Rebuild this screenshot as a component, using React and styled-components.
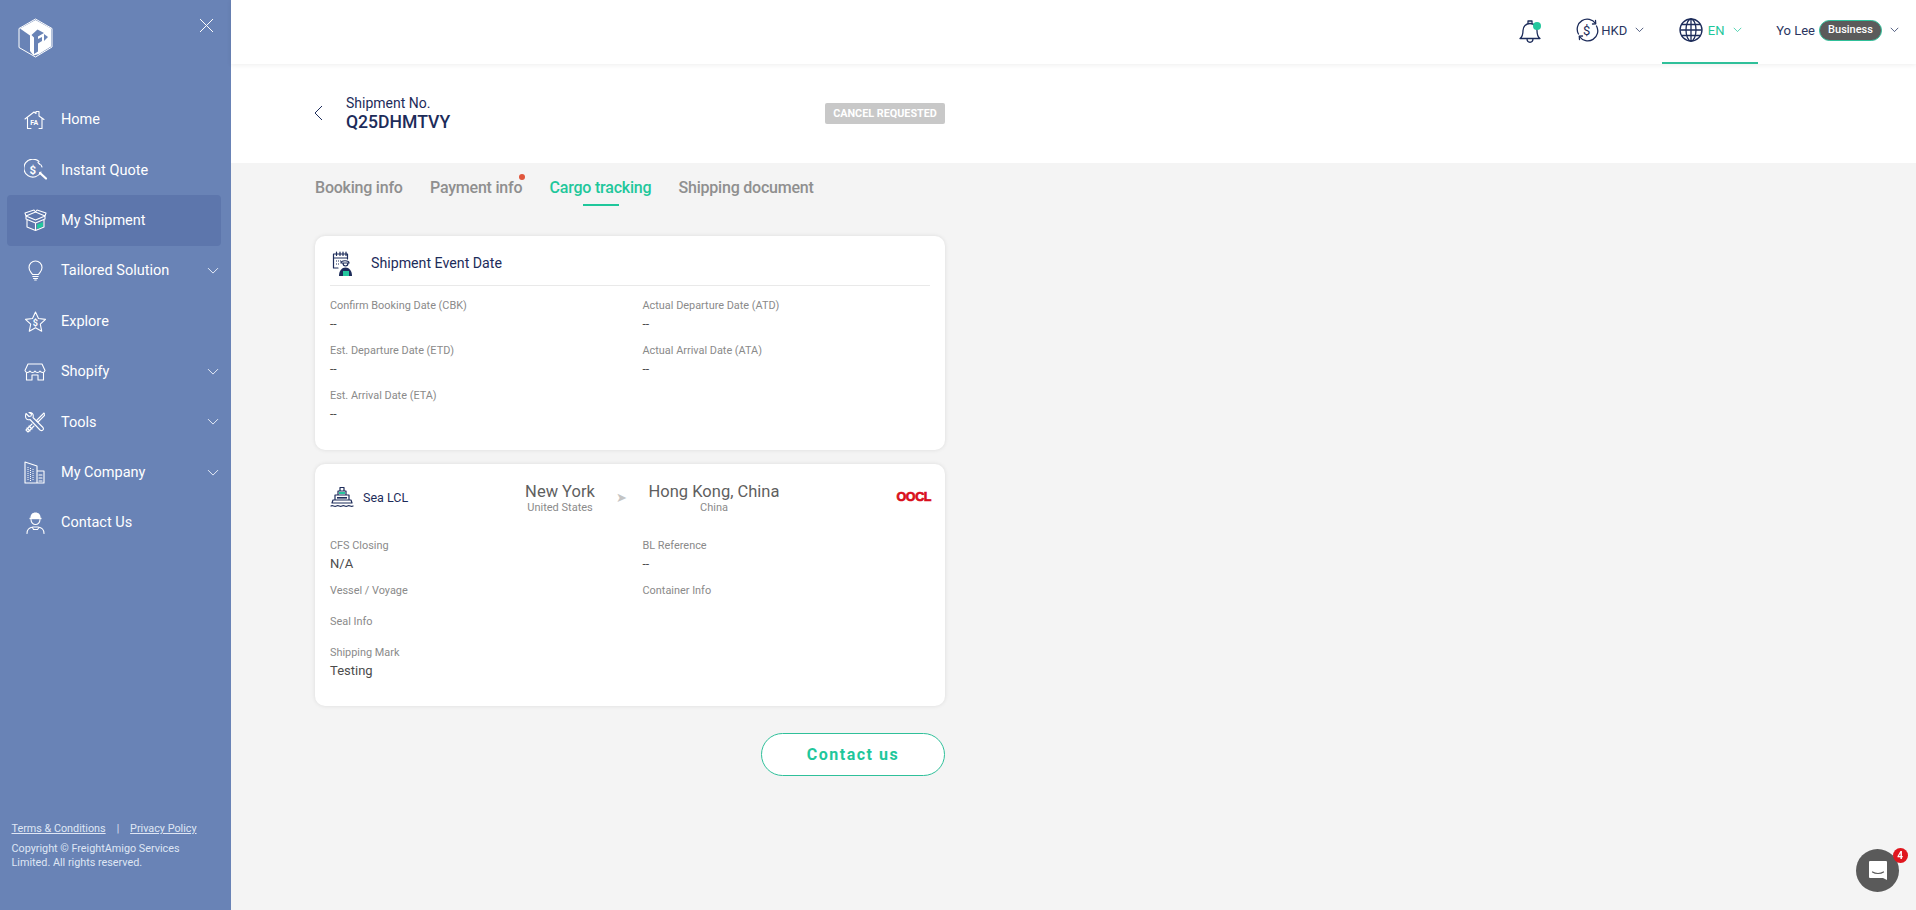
import React from "react";
import styled, { createGlobalStyle } from "styled-components";

const Global = createGlobalStyle`
  html, body { margin: 0; padding: 0; height: 100%; }
  body { font-family: Roboto, "Liberation Sans", sans-serif; background: #f4f4f4; overflow: hidden; }
  * { box-sizing: border-box; }
`;

const Shell = styled.div`display: flex; width: 100%; height: 910px;`;
const Sidebar = styled.aside`
  width: 231px; flex: none; background: #6983b6; color: #fff;
  display: flex; flex-direction: column; padding: 0 10px 0 7px;
`;
const SideTop = styled.div`
  height: 94.5px; display: flex; justify-content: space-between; align-items: flex-start;
  padding: 18px 7px 0 10px;
`;
const NavList = styled.nav`display: flex; flex-direction: column;`;
const NavItem = styled.div`
  height: 50.4px; display: flex; align-items: center; border-radius: 4px;
  background: ${p => (p.$active ? "#5d76ac" : "transparent")};
  padding: 0 0 0 17px;
`;
const NavIcon = styled.span`width: 37px; flex: none; display: flex; align-items: center;`;
const NavLabel = styled.span`font-size: 14.5px; font-weight: 400; flex: 1; color: #fff;`;
const NavChevron = styled.span`display: flex; width: 14px;`;
const SideFoot = styled.div`
  margin-top: auto; padding: 0 0 40px 4.5px; font-size: 10.8px; line-height: 14px; color: #dfe6f4;
`;
const FootLinks = styled.div`display: flex; align-items: center; margin-bottom: 6px;`;
const FootLink = styled.a`color: #dfe6f4; text-decoration: underline;`;
const FootSep = styled.span`margin: 0 11px; font-size: 10px;`;

const Main = styled.main`flex: 1; min-width: 0; display: flex; flex-direction: column; background: #f4f4f4;`;
const TopBar = styled.header`
  height: 64px; background: #fff; display: flex; justify-content: flex-end; align-items: stretch;
  box-shadow: 0 1px 5px rgba(0,0,0,.07); position: relative; padding-right: 17px; flex: none; color: #1d2c5a;
`;
const BarItem = styled.div`
  display: flex; align-items: center; font-size: 13px;
  width: ${p => p.$w}px; justify-content: ${p => p.$center ? "center" : "flex-start"};
  border-bottom: ${p => (p.$on ? "2px solid #2fc09a" : "2px solid transparent")};
  color: ${p => (p.$on ? "#1fc79b" : "#2a3560")};
  margin-left: ${p => p.$ml || 0}px; padding-bottom: 2px;
`;
const BarText = styled.span`margin: 0 ${p => p.$mr || 0}px 0 ${p => p.$ml || 0}px;`;
const BellWrap = styled.span`position: relative; display: flex; margin-top: 2px;`;
const BellDot = styled.span`
  position: absolute; top: 3px; right: 0; width: 8px; height: 8px; border-radius: 50%; background: #24c79d;
`;
const Pill = styled.span`
  width: 63px; height: 21px; border-radius: 11px; background: #5b5b5b; border: 1px solid #2fc09a;
  color: #fff; font-size: 11px; font-weight: 500; text-align: center; line-height: 17px; margin: 0 8px 0 4px;
`;
const SubHead = styled.section`
  height: 99px; background: #fff; padding-left: 84px; flex: none;
`;
const SubInner = styled.div`
  width: 630px; display: flex; align-items: flex-start; padding-top: 31px;
`;
const BackBtn = styled.span`display: flex; margin: 10px 23px 0 -1px;`;
const ShipLabel = styled.div`font-size: 14px; line-height: 17px; color: #1d2c5a;`;
const ShipNo = styled.div`font-size: 17.6px; line-height: 21px; font-weight: 500; color: #1d2c5a;`;
const Status = styled.span`
  margin: 8px 0 0 auto; width: 120px; height: 21px; border-radius: 2px; background: #c8c8c8; color: #fff;
  font-size: 10.8px; font-weight: 700; display: flex; align-items: center; justify-content: center;
`;
const Content = styled.div`width: 630px; margin-left: 84px; display: flex; flex-direction: column;`;
const Tabs = styled.div`display: flex; gap: 27.3px; height: 73px; padding-top: 14px;`;
const Tab = styled.div`
  position: relative; font-size: 16px; font-weight: 500; height: 21px; line-height: 21px;
  color: ${p => (p.$active ? "#1fc79b" : "#8f8f8f")}; letter-spacing: -0.22px;
`;
const TabLine = styled.span`
  position: absolute; left: 33px; width: 36px; top: 27px; height: 2px; background: #1fc79b;
`;
const TabDot = styled.span`
  position: absolute; right: -3px; top: -3px; width: 6px; height: 6px; border-radius: 50%; background: #e0563c;
`;
const Card = styled.section`
  background: #fff; border-radius: 10px; box-shadow: 0 0 4px rgba(0,0,0,.1);
  height: ${p => p.$h}px; padding: 0 15px; margin-bottom: ${p => p.$mb}px;
`;
const CardHead = styled.div`
  height: 50px; display: flex; align-items: center; border-bottom: 1px solid #e9e9e9; padding: 5px 0 0 2px; gap: 17px;
  font-size: 14.2px; color: #1d2c5a;
`;
const FieldGrid = styled.div`
  display: grid; grid-template-columns: 312.5px 1fr; grid-auto-rows: ${p => p.$row}px; padding-top: ${p => p.$pt}px;
`;
const Field = styled.div`display: flex; flex-direction: column;`;
const Label = styled.div`font-size: 10.9px; line-height: 15px; color: #8a8a8a;`;
const Value = styled.div`
  font-size: ${p => (p.$big ? 13 : 12)}px; line-height: 18px; margin-top: ${p => (p.$big ? 1.5 : 2)}px; color: #4c4c4c;
`;
const RouteRow = styled.div`display: flex; align-items: center; height: 66px;`;
const Mode = styled.div`
  display: flex; align-items: center; gap: 9px; font-size: 12.5px; color: #1d2c5a; width: 186px; flex: none;
`;
const Place = styled.div`
  display: flex; flex-direction: column; align-items: center; width: ${p => p.$w}px; flex: none;
  white-space: nowrap; padding-top: 1.5px;
`;
const City = styled.div`font-size: 16.5px; line-height: 20px; color: #5f5f5f;`;
const Country = styled.div`font-size: 11px; line-height: 12px; color: #8a8a8a;`;
const Arrow = styled.span`
  font-size: 13px; color: #c4c4c4; width: 45px; text-align: center; padding: 1px 10px 0 0; flex: none;
`;
const Carrier = styled.div`
  margin-left: auto; font-family: "Liberation Sans", sans-serif; font-size: 12.5px; font-weight: 700;
  color: #d90f1c; letter-spacing: -0.4px; margin-right: -1px; -webkit-text-stroke: .7px #d90f1c;
`;
const FieldStack = styled.div`padding-top: 8px;`;
const FieldRow = styled.div`
  display: grid; grid-template-columns: 312.5px 1fr; height: ${p => p.$h}px;
`;
const ContactRow = styled.div`display: flex; justify-content: flex-end; margin-top: 14px;`;
const ContactBtn = styled.button`
  width: 184px; height: 43px; border-radius: 22px; border: 1px solid #2fc09a; background: #fff;
  color: #1fc79b; font: 700 16px Roboto, sans-serif; letter-spacing: 1.5px;
`;
const ChatFab = styled.div`
  position: fixed; left: 1856px; top: 849px; width: 43px; height: 43px; border-radius: 50%;
  background: #5a5a5a; display: flex; align-items: center; justify-content: center;
`;
const ChatBadge = styled.span`
  position: absolute; right: -8.5px; top: -1px; width: 15px; height: 15px; border-radius: 50%;
  background: #e0161e; color: #fff; font-size: 10px; font-weight: 700; text-align: center; line-height: 15px;
`;

const W = { fill: "none", stroke: "#fff", strokeWidth: 1.1, strokeLinecap: "round", strokeLinejoin: "round" };
const N = { fill: "none", stroke: "#1d2c5a", strokeWidth: 1.3, strokeLinecap: "round", strokeLinejoin: "round" };

const Chevron = ({ color = "#1d2c5a", size = 12 }) => (
  <svg width={size} height={size * 0.6} viewBox="0 0 12 7"><path d="M1 1l5 5 5-5" fill="none" stroke={color} strokeWidth="1" /></svg>
);

const Logo = () => (
  <svg width="37" height="40" viewBox="0 0 37 40">
    <path d="M18.500 1L35 10.500V29L18.500 39L2 29.500V10.500Z" fill="none" stroke="#fff" strokeWidth="1" />
    <path d="M3 10.500L18.500 2L34 10.500V28.500L22 36L16.500 37.500L13 33V17.500Z" fill="#fff" />
    <path d="M14.500 17L20.500 11.500L27 15L21 18.500V21L25 19V23L21 25.500V33.500L17 36V19.500Z" fill="#6983b6" />
    <path d="M27 16L31 19L27 23Z" fill="#6983b6" />
  </svg>
);
const CloseX = () => <svg width="15" height="15" viewBox="0 0 15 15"><path d="M1 1l13 13M14 1L1 14" stroke="#fff" strokeWidth="1" /></svg>;

const Home = () => <svg width="22" height="20" viewBox="0 0 22 20"><g {...W}><path d="M1 9L10 2l2 1.500V1.500h3V6l5 3.500M3.500 8v10.500H7M18 8v10.500h-3" /></g><text x="6.300" y="14.500" fill="#fff" fontSize="7" fontWeight="700" fontFamily="Roboto">FA</text></svg>;
const Quote = () => <svg width="24" height="22" viewBox="0 0 24 22"><g {...W}><path d="M15 2.500A9 9 0 1 0 17 13" /><path d="M14 3.500l2 2M17 6l1 2" /><path d="M16 14l6 5.500" strokeWidth="2.200" /></g><text x="5.500" y="14.500" fill="#fff" fontSize="11.500" fontWeight="700" fontFamily="Roboto">$</text></svg>;
const Box = () => <svg width="23" height="22" viewBox="0 0 23 22"><g {...W}><path d="M2 7l9.500 4L21 7l-9.500-4zM2 7L1 4l9-3 1.500 2L13 1l9 3-1 3M2 7v3l9.500 4 9.500-4V7M3 11v7l8.500 3.500L20 18v-7M11.500 14v7" /></g><path d="M13 15.500l6-2.500v4.500l-6 2.500z" fill="#24c79d" /></svg>;
const Bulb = () => <svg width="15" height="21" viewBox="0 0 15 21" style={{ marginLeft: 4 }}><g {...W}><path d="M4.500 14.500C3 12 1 11 1 7.500a6.500 6.500 0 0 1 13 0c0 3.500-2 4.500-3.500 7zM4.800 16.500h5.400M5.500 18.500h4M6.700 20h1.600" /></g></svg>;
const Star = () => <svg width="23" height="21" viewBox="0 0 23 21"><path {...W} d="M11.500 1l3 6.500 7 .9-5.200 4.800 1.400 7-6.200-3.500-6.200 3.500 1.400-7L1.500 8.400l7-.9z" /><text x="8.700" y="14.500" fill="#fff" fontSize="9" fontWeight="700" fontFamily="Roboto">$</text></svg>;
const Shop = () => <svg width="22" height="18" viewBox="0 0 22 18"><g {...W}><path d="M4 1h14l3 6.500c-.5 2.500-4 2.500-5 .5-1 2-4 2-5 0-1 2-4 2-5 0-1 2-4.500 2-5-.5zM2.500 10v7H8v-5h6v5h5.500v-7" /></g></svg>;
const Tools = () => <svg width="21" height="21" viewBox="0 0 21 21"><g {...W}><path d="M2 1.500l3 3 2-.5.500-2L5 .5c3-.5 5 2 4 5L19 15.500c1 1.500 0 3.500-2 3-.5-.2-1-.5-1-.5L6 7.500c-3 1-5.500-1-4-6z" /><path d="M19.500 1.500l-7 7 1.500 1.500 7-7-1-2zM8 12l-6 6 2 2 6-6" /><path d="M3 16l3 3M5 14l3 3" /></g></svg>;
const Company = () => <svg width="21" height="23" viewBox="0 0 21 23"><g {...W}><path d="M1 1l12 4v17H1zM13 10h7v12h-7M15 14h3M15 17h3M15 20h3" /></g><g stroke="#fff" strokeWidth="1" strokeDasharray="1 1"><path d="M4 6v14M6.500 7v13M9 8v12" /></g></svg>;
const Agent = () => <svg width="19" height="22" viewBox="0 0 19 22" style={{ marginLeft: 2 }}><g {...W}><path d="M1 21.500c0-4 2-6 6-6.500h5c4 .5 6 2.500 6 6.500" /><path d="M5 7.500a4.500 5 0 0 0 9 0" /><path d="M13 15.500l-1.500 2h-4l-1-2" /></g><path d="M4.500 7C4 2.500 6.500.5 9.500.5S15 2.500 14.500 7z" fill="#fff" /><path d="M3.500 6.500h12" stroke="#fff" strokeWidth="1.400" /></svg>;

const Bell = () => <svg width="22" height="24" viewBox="0 0 22 24"><g {...N}><path d="M1 19.500c3-2 3-4.500 3-8 0-4 3-7 7-7s7 3 7 7c0 3.500 0 6 3 8zM8 19.500c0 5 6 5 6 0M9 4.500V2h4v2.500" /></g></svg>;
const Currency = () => <svg width="23" height="24" viewBox="0 0 23 24"><g {...N}><path d="M19.500 5.500A10 10 0 0 0 2.500 16M3.500 18.500a10 10 0 0 0 17-10.500" /><path d="M16.500 6l3.200-.2-.2-3.300M6.500 18l-3.200.2.200 3.300" /></g><text x="7" y="17" fill="#1d2c5a" fontSize="13" fontFamily="Roboto">$</text></svg>;
const Globe = () => <svg width="24" height="24" viewBox="0 0 24 24"><g {...N}><circle cx="12" cy="12" r="11" /><ellipse cx="12" cy="12" rx="5" ry="11" /><path d="M12 1v22M1.500 12h21M3 6.500h18M3 17.500h18" /></g></svg>;
const Back = () => <svg width="9" height="16" viewBox="0 0 9 16"><path d="M8 1L1 8l7 7" fill="none" stroke="#1d2c5a" strokeWidth="1" /></svg>;

const EventIcon = () => (
  <svg width="22" height="27" viewBox="0 0 22 27">
    <g {...N} strokeWidth="1.200"><path d="M6 18H1.500V4h14v5M1.500 8h14M4.500 2v3.500M8 2v3.500M11 2v3.500M14 2v3.500" /></g>
    <path d="M4 11h6M4 14h4" stroke="#1d2c5a" strokeDasharray="1 1" strokeWidth="1.200" />
    <path d="M9 13c0-3 8-3 8 0zM11 13c0 4 5 4 5 0" fill="#fff" stroke="#1d2c5a" strokeWidth="1.200" />
    <path d="M7 26c0-5.500 3-8.500 6.500-8.500S20 20.500 20 26z" fill="#1d2c5a" />
    <rect x="11" y="21" width="6" height="5" fill="#24c79d" />
  </svg>
);
const ShipIcon = () => (
  <svg width="24" height="23" viewBox="0 0 24 23">
    <g {...N} strokeWidth="1.200">
      <path d="M3 14l-1 3h20l-1-3zM5 14V9h14v5M8 9V5h8v4M10 5V1.500h4V5" />
      <path d="M1 20c2-1.500 3 1.500 5.500 0s3 1.500 5.500 0 3 1.500 5.500 0 3 1.500 5.500 0" />
    </g>
    <rect x="9" y="6" width="6" height="2" fill="#24c79d" />
    <rect x="7" y="11" width="10" height="1.600" fill="#1d2c5a" />
  </svg>
);
const Messenger = () => (
  <svg width="20" height="21" viewBox="0 0 20 21">
    <path d="M2 1h16a1 1 0 0 1 1 1v18l-4-2H2a1 1 0 0 1-1-1V2a1 1 0 0 1 1-1z" fill="#fff" />
    <path d="M4.500 12c3 2 8 2 11 0" fill="none" stroke="#5a5a5a" strokeWidth="1.200" strokeLinecap="round" />
  </svg>
);

const NAV = [
  ["Home", Home], ["Instant Quote", Quote], ["My Shipment", Box, "active"],
  ["Tailored Solution", Bulb, "more"], ["Explore", Star], ["Shopify", Shop, "more"],
  ["Tools", Tools, "more"], ["My Company", Company, "more"], ["Contact Us", Agent],
];

const Dates = [
  ["Confirm Booking Date (CBK)", "Actual Departure Date (ATD)"],
  ["Est. Departure Date (ETD)", "Actual Arrival Date (ATA)"],
  ["Est. Arrival Date (ETA)", null],
];

export default function App() {
  return (
    <>
      <Global />
      <Shell>
        <Sidebar>
          <SideTop><Logo /><CloseX /></SideTop>
          <NavList>
            {NAV.map(([label, Icon, flag]) => (
              <NavItem key={label} $active={flag === "active"}>
                <NavIcon><Icon /></NavIcon>
                <NavLabel>{label}</NavLabel>
                {flag === "more" && <NavChevron><Chevron color="#e6ecf7" /></NavChevron>}
              </NavItem>
            ))}
          </NavList>
          <SideFoot>
            <FootLinks>
              <FootLink>Terms &amp; Conditions</FootLink><FootSep>|</FootSep><FootLink>Privacy Policy</FootLink>
            </FootLinks>
            Copyright © FreightAmigo Services<br />Limited. All rights reserved.
          </SideFoot>
        </Sidebar>
        <Main>
          <TopBar>
            <BarItem><BellWrap><Bell /><BellDot /></BellWrap></BarItem>
            <BarItem $ml={35}><Currency /><BarText $ml={2} $mr={8}>HKD</BarText><Chevron size={9} /></BarItem>
            <BarItem $w={96} $center $on $ml={18}><Globe /><BarText $ml={5} $mr={8}>EN</BarText><Chevron size={9} color="#1fc79b" /></BarItem>
            <BarItem $ml={18}>Yo Lee<Pill>Business</Pill><Chevron size={9} /></BarItem>
          </TopBar>
          <SubHead>
            <SubInner>
              <BackBtn><Back /></BackBtn>
              <div>
                <ShipLabel>Shipment No.</ShipLabel>
                <ShipNo>Q25DHMTVY</ShipNo>
              </div>
              <Status>CANCEL REQUESTED</Status>
            </SubInner>
          </SubHead>
          <Content>
            <Tabs>
              <Tab>Booking info</Tab>
              <Tab>Payment info<TabDot /></Tab>
              <Tab $active>Cargo tracking<TabLine /></Tab>
              <Tab>Shipping document</Tab>
            </Tabs>
            <Card $h={214} $mb={14}>
              <CardHead><EventIcon />Shipment Event Date</CardHead>
              <FieldGrid $row={45} $pt={12}>
                {Dates.flatMap((row, i) => row.map((label, j) => (
                  <Field key={`${i}-${j}`}>
                    {label && <><Label>{label}</Label><Value>--</Value></>}
                  </Field>
                )))}
              </FieldGrid>
            </Card>
            <Card $h={242} $mb={13}>
              <RouteRow>
                <Mode><ShipIcon />Sea LCL</Mode>
                <Place $w={88}><City>New York</City><Country>United States</Country></Place>
                <Arrow>➤</Arrow>
                <Place $w={130}><City>Hong Kong, China</City><Country>China</Country></Place>
                <Carrier>OOCL</Carrier>
              </RouteRow>
              <FieldStack>
                <FieldRow $h={45}>
                  <Field><Label>CFS Closing</Label><Value $big>N/A</Value></Field>
                  <Field><Label>BL Reference</Label><Value>--</Value></Field>
                </FieldRow>
                <FieldRow $h={31}>
                  <Field><Label>Vessel / Voyage</Label></Field>
                  <Field><Label>Container Info</Label></Field>
                </FieldRow>
                <FieldRow $h={31}><Field><Label>Seal Info</Label></Field></FieldRow>
                <FieldRow $h={45}><Field><Label>Shipping Mark</Label><Value $big>Testing</Value></Field></FieldRow>
              </FieldStack>
            </Card>
            <ContactRow><ContactBtn>Contact us</ContactBtn></ContactRow>
          </Content>
        </Main>
      </Shell>
      <ChatFab><Messenger /><ChatBadge>4</ChatBadge></ChatFab>
    </>
  );
}
